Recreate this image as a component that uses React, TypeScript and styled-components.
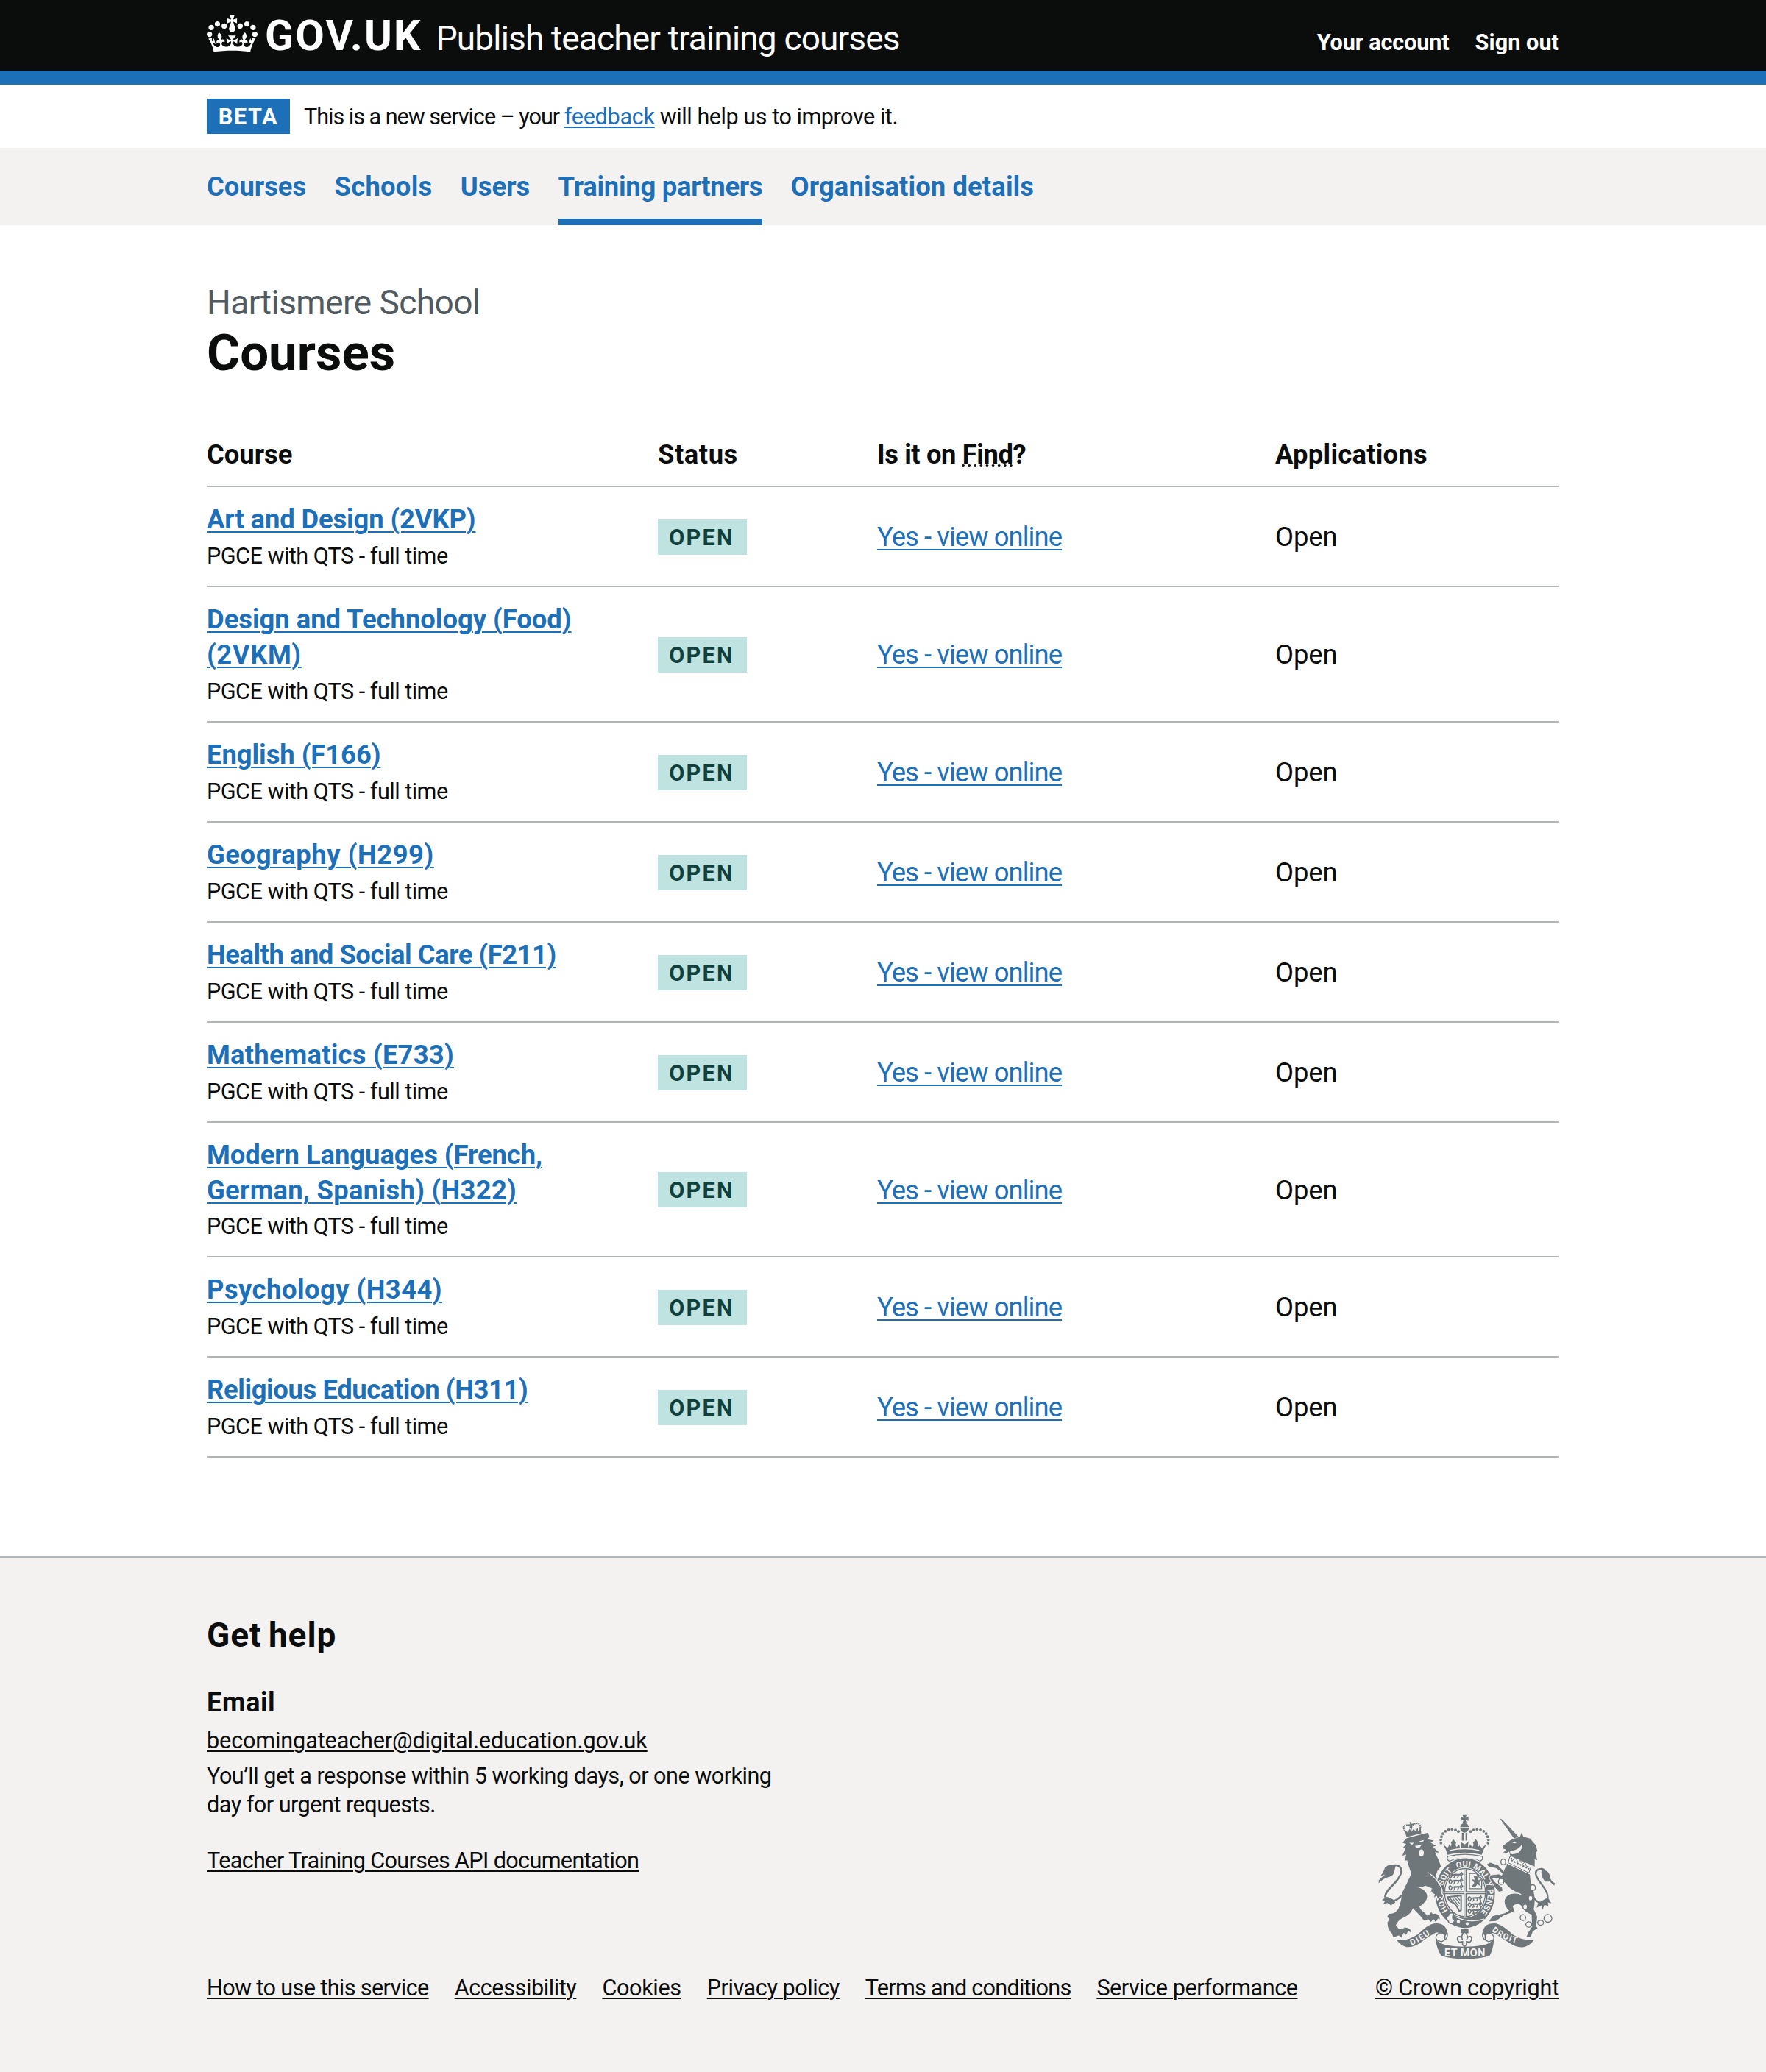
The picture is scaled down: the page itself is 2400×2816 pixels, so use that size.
import React from "react";
import styled, { createGlobalStyle, css } from "styled-components";

const color = {
  ink: "#0b0c0c",
  blue: "#1d70b8",
  grey: "#f3f2f1",
  border: "#b1b4b6",
  secondary: "#505a5f",
  tagBg: "#bfe3e0",
  tagInk: "#10403c",
  crest: "#6f777b",
};

const GlobalStyle = createGlobalStyle`
  *, *::before, *::after { box-sizing: border-box; }
  body {
    margin: 0;
    background: ${color.grey};
    color: ${color.ink};
    font-family: Roboto, "Liberation Sans", sans-serif;
    font-size: 36.4px;
    line-height: 47.87px;
  }
  h1, h2, h3, p, ul { margin: 0; padding: 0; }
  ul { list-style: none; }
`;

const small = css`
  font-size: 30.6px;
  line-height: 38.3px;
`;

type Tracked = { $track?: number };
const tracked = css<Tracked>`
  letter-spacing: ${(p) => p.$track ?? 0}px;
`;

const Container = styled.div`
  width: 1838px;
  margin: 0 auto;
`;

/* Header */

const Header = styled.header`
  height: 115px;
  background: ${color.ink};
  border-bottom: 19px solid ${color.blue};
  color: #fff;
`;

const HeaderRow = styled(Container)`
  display: flex;
  align-items: baseline;
  height: 96px;
`;

const Crown = styled.svg`
  align-self: flex-start;
  width: 69px;
  height: 51px;
  margin: 20px 10px 0 0;
  fill: currentColor;
`;

const Logotype = styled.span`
  font-size: 57.4px;
  font-weight: 700;
  line-height: 97px;
  letter-spacing: 2.2px;
`;

const ServiceName = styled.span`
  margin-left: 19px;
  font-size: 46px;
  line-height: 57px;
  letter-spacing: -0.83px;
`;

const AccountLinks = styled.nav`
  display: flex;
  gap: 35px;
  margin-left: auto;
  ${small}
  font-weight: 700;
`;

const AccountLink = styled.a<Tracked>`
  ${tracked}
`;

/* Phase banner */

const PhaseBar = styled.div`
  background: #fff;
`;

const Phase = styled(Container)`
  display: flex;
  align-items: center;
  gap: 19px;
  height: 86px;
  ${small}
`;

const PhaseText = styled.div`
  padding-top: 2px;
`;

const Tag = styled.strong<{ $kind: "phase" | "status" }>`
  display: flex;
  align-items: center;
  justify-content: center;
  height: 48px;
  padding-top: 2px;
  font-size: 30.6px;
  font-weight: 700;
  line-height: 46px;
  ${(p) =>
    p.$kind === "phase"
      ? css`
          width: 113px;
          background: ${color.blue};
          color: #fff;
          letter-spacing: 1.6px;
        `
      : css`
          width: 121px;
          padding-right: 2px;
          background: ${color.tagBg};
          color: ${color.tagInk};
          letter-spacing: 2.2px;
        `}
`;

const Run = styled.span<Tracked>`
  ${tracked}
`;

const Link = styled.a<Tracked & { $ink?: boolean; $bold?: boolean }>`
  ${tracked}
  color: ${(p) => (p.$ink ? color.ink : color.blue)};
  font-weight: ${(p) => (p.$bold ? 700 : 400)};
  text-decoration: underline;
  text-decoration-thickness: 2px;
  text-underline-offset: 0.11em;
`;

/* Primary navigation */

const NavBar = styled.nav`
  background: ${color.grey};
`;

const NavList = styled(Container).attrs({ as: "ul" })`
  display: flex;
  gap: 38.3px;
`;

const NavItem = styled.li<Tracked & { $active?: boolean }>`
  ${tracked}
  height: 105px;
  line-height: 106px;
  font-weight: 700;
  color: ${color.blue};
  box-shadow: ${(p) => (p.$active ? `inset 0 -9px ${color.blue}` : "none")};
`;

/* Main */

const Main = styled.main`
  padding: 76.5px 0 133.6px;
  background: #fff;
`;

const Caption = styled.div`
  font-size: 46px;
  line-height: 57.5px;
  letter-spacing: -0.53px;
  color: ${color.secondary};
`;

const Title = styled.h1`
  margin-bottom: 55.9px;
  padding-top: 1.5px;
  font-size: 69px;
  line-height: 76.6px;
  font-weight: 700;
`;

const Row = styled.div<{ $head?: boolean }>`
  display: grid;
  grid-template-columns: 613px 298px 541px 386px;
  align-items: center;
  padding: 20.1px 0 18.1px;
  border-bottom: 2px solid ${color.border};
  font-weight: ${(p) => (p.$head ? 700 : 400)};
`;

const Cell = styled.div<Tracked>`
  ${tracked}
  padding-right: 38px;
`;

const CourseLine = styled.div`
  white-space: nowrap;
`;

const Hint = styled.span`
  display: inline-block;
  vertical-align: baseline;
  font-size: 30.6px;
  line-height: 38.3px;
  letter-spacing: -0.52px;
`;

const Abbr = styled.abbr`
  text-decoration: underline dotted 4px;
  text-decoration-skip-ink: none;
  text-underline-offset: 1px;
`;

/* Footer */

const Footer = styled.footer`
  height: 700.5px;
  padding-top: 77px;
  border-top: 2px solid ${color.border};
  background: ${color.grey};
`;

const FooterRow = styled(Container)`
  display: flex;
  justify-content: space-between;
  align-items: flex-end;
`;

const FooterMain = styled.div`
  ${small}
`;

const HelpTitle = styled.h2`
  margin-bottom: 38.5px;
  font-size: 46px;
  line-height: 57.5px;
  letter-spacing: 0.93px;
  word-spacing: -3px;
`;

const HelpSubtitle = styled.h3`
  margin-bottom: 9.6px;
  font-size: 36.4px;
  line-height: 47.9px;
  letter-spacing: 0.5px;
`;

const HelpText = styled.p<Tracked>`
  ${tracked}
  width: 800px;
  margin: 9.6px 0 38.3px;
`;

const FooterLinks = styled.ul`
  display: flex;
  gap: 35px;
  margin-top: 134.5px;
`;

const Copyright = styled.div`
  display: flex;
  flex-direction: column;
  align-items: center;
  ${small}
`;

const Crest = styled.svg`
  width: 240px;
  height: 197px;
  margin: 0 2px 19.8px 0;
`;

const nav = [
  { label: "Courses", track: 0.02 },
  { label: "Schools", track: 0.26 },
  { label: "Users", track: 0.02 },
  { label: "Training partners", track: -0.25, active: true },
  { label: "Organisation details", track: 0.11 },
];

const courses = [
  { lines: ["Art and Design (2VKP)"], tracks: [-0.12] },
  { lines: ["Design and Technology (Food)", "(2VKM)"], tracks: [-0.02, 0.6] },
  { lines: ["English (F166)"], tracks: [-0.05] },
  { lines: ["Geography (H299)"], tracks: [0.55] },
  { lines: ["Health and Social Care (F211)"], tracks: [-0.47] },
  { lines: ["Mathematics (E733)"], tracks: [0.22] },
  { lines: ["Modern Languages (French,", "German, Spanish) (H322)"], tracks: [-0.05, 0.3] },
  { lines: ["Psychology (H344)"], tracks: [0.46] },
  { lines: ["Religious Education (H311)"], tracks: [-0.39] },
];

const footerLinks = [
  { label: "How to use this service", track: -0.62 },
  { label: "Accessibility", track: -0.42 },
  { label: "Cookies", track: -0.35 },
  { label: "Privacy policy", track: -0.45 },
  { label: "Terms and conditions", track: -0.75 },
  { label: "Service performance", track: -0.48 },
];

const CrownIcon = () => (
  <Crown viewBox="0 0 132 97" aria-hidden="true">
    <path
      fillRule="evenodd"
      d="M25 30.2c3.5 1.5 7.7-.2 9.1-3.7 1.5-3.6-.2-7.8-3.9-9.2-3.6-1.4-7.6.3-9.1 3.9-1.4 3.5.3 7.5 3.9 9zM9 39.5c3.6 1.5 7.8-.2 9.2-3.7 1.5-3.6-.2-7.8-3.9-9.1-3.6-1.5-7.6.2-9.1 3.8-1.4 3.5.3 7.5 3.8 9zM4.4 57.2c3.5 1.5 7.7-.2 9.1-3.8 1.5-3.6-.2-7.7-3.9-9.1-3.5-1.5-7.6.3-9.1 3.8-1.4 3.5.3 7.6 3.9 9.1zm38.3-21.4c3.5 1.5 7.7-.2 9.1-3.8 1.5-3.6-.2-7.7-3.9-9.1-3.6-1.5-7.6.3-9.1 3.8-1.3 3.6.4 7.7 3.9 9.1zm64.4-5.6c-3.6 1.5-7.8-.2-9.1-3.7-1.5-3.6.2-7.8 3.8-9.2 3.6-1.4 7.7.3 9.2 3.9 1.3 3.5-.4 7.5-3.9 9zm15.9 9.3c-3.6 1.5-7.7-.2-9.1-3.7-1.5-3.6.2-7.8 3.7-9.1 3.6-1.5 7.7.2 9.2 3.8 1.5 3.5-.3 7.5-3.8 9zm4.7 17.7c-3.6 1.5-7.8-.2-9.2-3.8-1.5-3.6.2-7.7 3.9-9.1 3.6-1.5 7.7.3 9.2 3.8 1.3 3.5-.4 7.6-3.9 9.1zM89.3 35.8c-3.6 1.5-7.8-.2-9.2-3.8-1.4-3.6.2-7.7 3.9-9.1 3.6-1.5 7.7.3 9.2 3.8 1.4 3.6-.3 7.7-3.9 9.1zM69.7 17.7l8.9 4.7V9.3l-8.9 2.8c-.2-.3-.5-.6-.9-.9L72.4 0H59.6l3.5 11.2c-.3.3-.6.5-.9.9l-8.8-2.8v13.1l8.8-4.7c.3.3.6.7.9.9l-5 15.4v.1c-.2.8-.4 1.6-.4 2.4 0 4.1 3.1 7.5 7 8.1h.2c.3 0 .7.1 1 .1.4 0 .7 0 1-.1h.2c4-.6 7.1-4.1 7.1-8.1 0-.8-.1-1.7-.4-2.4V34l-5.1-15.4c.4-.2.7-.6 1-.9zM66 92.8c16.9 0 32.8 1.1 47.1 3.2 4-16.9 8.9-26.7 14-33.5l-9.6-3.4c1 4.9 1.1 7.2 0 10.2-1.5-1.4-3-4.3-4.2-8.7L108.6 76c2.8-2 5-3.2 7.5-3.3-4.4 9.4-10 11.9-13.6 11.2-4.3-.8-6.3-4.6-5.6-7.9 1-4.7 5.7-5.9 8-.5 4.3-8.7-3-11.4-7.6-8.8 7.1-7.2 7.9-13.5 2.1-21.1-8 6.1-8.1 12.3-4.5 20.8-4.7-5.4-12.1-2.5-9.5 6.2 3.4-5.2 7.9-2 7.2 3.1-.6 4.3-6.4 7.8-13.5 7.2-10.3-.9-10.9-8-11.2-13.8 2.5-.5 7.1 1.8 11 7.3L80.2 60c-4.1 4.4-8 5.3-12.3 5.4 1.4-4.4 8-11.6 8-11.6H55.5s6.4 7.2 7.9 11.6c-4.2-.1-8-1-12.3-5.4l1.4 16.4c3.9-5.5 8.5-7.7 10.9-7.3-.3 5.8-.9 12.8-11.1 13.8-7.2.6-12.9-2.9-13.5-7.2-.7-5 3.8-8.3 7.1-3.1 2.7-8.7-4.6-11.6-9.4-6.2 3.7-8.5 3.6-14.7-4.6-20.8-5.8 7.6-5 13.9 2.2 21.1-4.7-2.6-11.9.1-7.7 8.8 2.3-5.5 7.1-4.2 8.1.5.7 3.3-1.3 7.1-5.7 7.9-3.5.7-9-1.8-13.5-11.2 2.5.1 4.7 1.3 7.5 3.3l-4.7-15.4c-1.2 4.4-2.7 7.2-4.3 8.7-1.1-3-.9-5.3 0-10.2l-9.5 3.4c5 6.9 9.9 16.7 14 33.5 14.8-2.1 30.8-3.2 47.7-3.2z"
    />
  </Crown>
);

/* Beads of the left arch of the crown; the right arch mirrors them about x = 422. */
const crownBeads = [
  [326, 166], [325, 153], [328, 140], [334, 128], [344, 118], [357, 112], [371, 110], [385, 113], [397, 119],
];

const mottoWords = [
  { word: "HO", at: "16.5%" },
  { word: "SOIT", at: "35.5%" },
  { word: "QUI", at: "49%" },
  { word: "MAL", at: "60.5%" },
  { word: "Y", at: "69.5%" },
  { word: "PENSE", at: "80.5%" },
];

/* Three walking lions, one under another. */
const Lions = ({ x, y }: { x: number; y: number }) => (
  <g transform={`translate(${x} ${y})`} fill="none" stroke={color.crest} strokeWidth="5" strokeLinecap="round">
    {[0, 25, 50].map((dy) => (
      <g key={dy} transform={`translate(0 ${dy})`}>
        <path d="M4 14Q0 4 8 1L16 8Q28 2 46 6L54 -2 58 4 52 9" />
        <path d="M16 8L10 18M24 8L26 17 20 19M42 8L38 18M50 9L54 17M30 7L44 5" />
      </g>
    ))}
  </g>
);

const RoyalArms = () => (
  <Crest viewBox="70 50 720 590" fill={color.crest} aria-hidden="true">
    <defs>
      <path id="garter" d="M424 478A92 108 0 0 1 332 370A92 108 0 0 1 424 262A92 108 0 0 1 516 370A92 108 0 0 1 424 478" />
      <path id="ribbon-left" d="M206 583Q254 564 304 522" />
      <path id="ribbon-right" d="M532 524Q580 564 650 578" />
    </defs>

    {/* Lion */}
    <path d="M165 380Q135 412 110 402Q82 386 122 345Q163 306 165 278Q160 248 122 260" fill="none" stroke={color.crest} strokeWidth="8" />
    <path d="M142 254Q112 250 97 266Q92 286 79 301L98 293L72 318V330Q88 312 108 306Q136 302 137 276ZM105 385L85 398L99 401L90 415L108 410L122 420L140 408L130 395Z" />
    <path d="M186 146L273 124L279 142L268 150L297 156L284 164L306 178L292 181L318 205L301 204L317 236L326 262L312 278L304 300L330 338L318 385L293 392L298 376L284 367L289 350L265 336Q252 350 220 344Q258 350 267 372Q278 400 238 425Q242 440 262 452L268 462L280 458L286 447L292 455L304 454Q322 460 321 478L314 474L304 488L296 476L284 488L274 476L256 482L243 464L212 432Q200 460 172 470Q148 482 142 502L154 516L168 518L178 510L190 512Q206 518 203 530L192 524L184 540L174 532L164 552L154 542L132 551L126 535Q106 515 108 488L116 480L107 466L114 454Q140 456 152 434Q166 400 166 372Q190 325 205 290L195 262L188 236L179 238L184 212L168 218L181 188L171 185L184 170L169 164Z" />
    <path d="M196 165L215 165L208 174ZM237 158L257 154L249 166ZM219 178L246 174L240 184L228 187Z" fill={color.grey} />
    <ellipse cx="246" cy="206" rx="10" ry="14" fill={color.grey} />
    <path d="M183 133L177 112L190 122L198 108L206 120L216 106L220 118L232 104L232 118L243 108L246 126L186 142Z" />
    <path d="M178 118Q166 92 188 93Q198 93 204 106Q206 90 224 86Q248 84 240 114" fill="none" stroke={color.crest} strokeWidth="6" strokeDasharray="5 3" />
    <path d="M201 80L206 104M192 94L214 89" stroke={color.crest} strokeWidth="6" fill="none" />

    {/* Unicorn */}
    <path d="M696 375Q722 425 754 402Q776 384 733 330Q698 285 722 274Q745 266 752 285" fill="none" stroke={color.crest} strokeWidth="7" />
    <path d="M736 277L757 280Q770 290 770 306Q776 322 790 330L788 340L768 322Q756 326 748 320Q732 300 736 277ZM762 388L776 412L762 408L764 424L748 418L740 438L736 420L716 430L722 410Z" />
    <path d="M566 66L575 70L642 140L624 148Z" />
    <path d="M610 154L648 140L655 123L662 140L690 148L698 158L712 174L719 198L712 206L718 236L708 232V262L694 256L608 218L604 200L594 206L580 204L592 193L578 188L580 176Z" />
    <path d="M614 162Q624 158 634 166Q622 170 614 162ZM608 198Q642 196 657 170Q662 188 640 206Q622 214 608 210Z" fill={color.grey} />
    <path d="M607 220L622 236L630 226L640 244L650 236L658 252L668 244L674 260L692 266L684 288L600 246Z" fill={color.grey} stroke={color.crest} strokeWidth="3" />
    <path d="M612 236L686 272" stroke={color.crest} strokeWidth="6" strokeDasharray="7 6" />
    <path d="M594 250L688 294Q692 340 704 366Q712 400 704 436L718 466L714 506L720 512L700 526L692 548L674 550L682 530L697 508L696 458Q664 448 650 418Q630 410 618 424L626 444L580 462L550 484L522 485L536 464L586 452L604 442Q576 414 590 388Q606 368 640 368Q604 354 590 330Z" />
    <path d="M604 372Q640 366 652 376" stroke={color.grey} strokeWidth="4" fill="none" />

    {/* Crown */}
    {crownBeads.map(([cx, cy]) => (
      <React.Fragment key={`${cx}-${cy}`}>
        <circle cx={cx} cy={cy} r="5.6" />
        <circle cx={844 - cx} cy={cy} r="5.6" />
      </React.Fragment>
    ))}
    <path d="M414 52H430L426 63L438 58V76L426 71L430 83H414L418 71L406 76V58L418 63ZM404 101Q406 88 422 84Q438 88 440 101ZM404 106H440Q438 120 422 124Q406 120 404 106ZM411 124H418V156H411ZM426 124H433V156H426Z" />
    <path d="M334 170L352 186Q360 178 358 170L364 180Q372 172 366 166L376 150L388 166Q382 174 390 182L400 172L404 188Q412 176 404 160L422 172L440 160Q432 176 440 188L444 172L454 182Q462 174 456 166L468 150L478 166Q472 172 480 180L486 170Q484 178 492 186L512 170Q498 192 492 214Q422 196 352 214Q348 192 334 170Z" />
    <path d="M362 196Q422 182 482 196" stroke={color.grey} strokeWidth="4" fill="none" />
    <path d="M354 220Q422 204 494 220Q500 232 486 240Q422 216 360 240Q346 232 354 220Z" fill={color.grey} stroke={color.crest} strokeWidth="4" />

    {/* Garter and shield */}
    <ellipse cx="424" cy="370" rx="126" ry="146" fill={color.grey} />
    <ellipse cx="424" cy="370" rx="122" ry="142" />
    <ellipse cx="424" cy="368" rx="88" ry="103" fill={color.grey} />
    <ellipse cx="424" cy="368" rx="83" ry="98" fill={color.grey} stroke={color.crest} strokeWidth="4" />
    <path d="M424 272V466M342 368H506" stroke={color.crest} strokeWidth="12" />
    <path d="M424 272V466M342 368H506" stroke={color.grey} strokeWidth="4" />
    <Lions x={356} y={289} />
    <Lions x={434} y={384} />
    <path d="M442 352V290H470L492 320V352Z" fill="none" stroke={color.crest} strokeWidth="4" />
    <path d="M450 346L462 328L450 314L464 316L458 298L474 302L480 318L488 314L482 328L490 344L474 334L466 346Z" />
    <path d="M352 386L408 380V440L400 444Q392 420 376 410Q358 404 352 386Z" fill="none" stroke={color.crest} strokeWidth="6" />
    <path d="M362 390L396 432M371 388L398 422M381 386L402 412M391 384L404 400" stroke={color.crest} strokeWidth="4" />
    <g fill={color.grey} fontFamily="Roboto, sans-serif" fontWeight="700" fontSize="33" textAnchor="middle">
      {mottoWords.map((m) => (
        <text key={m.word}>
          <textPath href="#garter" startOffset={m.at}>{m.word}</textPath>
        </text>
      ))}
    </g>

    {/* The lion's forepaw on the garter */}
    <path d="M276 288Q304 306 318 332Q334 352 330 372L336 380L331 396L322 386L312 398L308 384L294 392L299 376L284 367L289 350L266 340Z" stroke={color.grey} strokeWidth="4" />
    <path d="M264 286L282 292L296 344L284 368L289 350L262 340Z" />

    {/* The unicorn's forelegs on the garter */}
    <path
      d="M594 268L584 284L560 256L526 244L511 253L520 263L552 270L576 290L578 300L562 292L528 296Q518 304 528 318L546 348L562 366L578 362L576 346L548 326L536 310L560 312L592 332Z"
      stroke={color.grey}
      strokeWidth="3"
    />
    <path d="M590 262L608 262L612 344L592 334L572 304Z" />
    <g fill={color.grey} stroke={color.crest} strokeWidth="4">
      <ellipse cx="580" cy="243" rx="10" ry="12" />
      <ellipse cx="571" cy="323" rx="11" ry="12" />
      <ellipse cx="700" cy="348" rx="11" ry="12" />
      <ellipse cx="691" cy="391" rx="9" ry="11" />
      <ellipse cx="669" cy="426" rx="9" ry="11" />
      <ellipse cx="660" cy="470" rx="11" ry="12" />
      <ellipse cx="684" cy="498" rx="12" ry="11" />
      <ellipse cx="732" cy="491" rx="12" ry="10" />
      <circle cx="762" cy="473" r="16" />
    </g>

    {/* Buckle and strap */}
    <path d="M378 452Q360 446 356 462Q340 470 356 484Q356 498 376 492L384 480Q370 476 374 464Z" fill={color.grey} stroke={color.crest} strokeWidth="5" />
    <path d="M384 466Q440 494 502 476" fill="none" stroke={color.grey} strokeWidth="4" />
    <circle cx="397" cy="485" r="6.5" fill={color.grey} />
    <circle cx="433" cy="495" r="6.5" fill={color.grey} />

    {/* Ribbon */}
    <path d="M144 560Q190 568 232 538Q272 498 296 494Q344 488 352 530Q346 548 334 552Q328 530 306 530Q272 548 242 572Q214 592 186 590Q162 584 144 560Z" />
    <path d="M706 560Q660 566 620 540Q578 500 552 494Q502 488 496 530Q502 546 516 550Q520 530 544 534Q576 554 606 574Q634 594 664 590Q688 584 706 560Z" />
    <path d="M352 532Q356 558 328 568Q300 562 306 546Q314 528 334 534Q350 546 336 566M496 532Q490 558 520 568Q548 562 540 546Q532 528 514 536Q498 546 512 566" fill={color.grey} stroke={color.crest} strokeWidth="4" />
    <path d="M304 556Q316 574 346 582Q422 596 500 582Q530 574 542 556Q540 600 524 626Q422 652 328 626Q308 600 304 556Z" />
    <g fill={color.grey} fontFamily="Roboto, sans-serif" fontWeight="700">
      <text fontSize="34" letterSpacing="5">
        <textPath href="#ribbon-left">DIEU</textPath>
      </text>
      <text fontSize="34" letterSpacing="4">
        <textPath href="#ribbon-right">DROIT</textPath>
      </text>
      <text x="423" y="628" fontSize="43" textAnchor="middle" textLength="166">ET MON</text>
    </g>

    {/* Fleur-de-lis */}
    <path d="M406 516L438 516V534H406Z" />
    <path d="M422 526Q440 544 430 562Q434 544 448 548Q456 558 444 570L430 568V580L422 588L414 580V568L400 570Q388 558 396 548Q410 544 414 562Q404 544 422 526Z" fill={color.grey} stroke={color.crest} strokeWidth="5" />
  </Crest>
);

export default function App() {
  return (
    <>
      <GlobalStyle />
      <Header>
        <HeaderRow>
          <CrownIcon />
          <Logotype>GOV.UK</Logotype>
          <ServiceName>Publish teacher training courses</ServiceName>
          <AccountLinks>
            <AccountLink $track={-0.12}>Your account</AccountLink>
            <AccountLink $track={0.06}>Sign out</AccountLink>
          </AccountLinks>
        </HeaderRow>
      </Header>

      <PhaseBar>
        <Phase>
          <Tag $kind="phase">BETA</Tag>
          <PhaseText>
            <Run $track={-1.03}>This is a new service – your </Run>
            <Link $track={-0.29}>feedback</Link>
            <Run $track={-0.47}> will help us to improve it.</Run>
          </PhaseText>
        </Phase>
      </PhaseBar>

      <NavBar>
        <NavList>
          {nav.map((n) => (
            <NavItem key={n.label} $track={n.track} $active={n.active}>
              {n.label}
            </NavItem>
          ))}
        </NavList>
      </NavBar>

      <Main>
        <Container>
          <Caption>Hartismere School</Caption>
          <Title>Courses</Title>
          <Row $head>
            <Cell>Course</Cell>
            <Cell $track={0.54}>Status</Cell>
            <Cell $track={-0.41}>
              Is it on <Abbr>Find</Abbr>?
            </Cell>
            <Cell $track={0.24}>Applications</Cell>
          </Row>
          {courses.map((c) => (
            <Row key={c.lines[0]}>
              <Cell>
                {c.lines.map((line, i) => (
                  <CourseLine key={line}>
                    <Link $bold $track={c.tracks[i]}>
                      {line}
                    </Link>
                  </CourseLine>
                ))}
                <Hint>PGCE with QTS - full time</Hint>
              </Cell>
              <Cell>
                <Tag $kind="status">OPEN</Tag>
              </Cell>
              <Cell>
                <Link $track={-0.94}>Yes - view online</Link>
              </Cell>
              <Cell $track={-0.09}>Open</Cell>
            </Row>
          ))}
        </Container>
      </Main>

      <Footer>
        <FooterRow>
          <FooterMain>
            <HelpTitle>Get help</HelpTitle>
            <HelpSubtitle>Email</HelpSubtitle>
            <Link $ink $track={-0.13}>
              becomingateacher@digital.education.gov.uk
            </Link>
            <HelpText $track={-0.51}>
              You’ll get a response within 5 working days, or one working day for urgent requests.
            </HelpText>
            <Link $ink $track={-0.64}>
              Teacher Training Courses API documentation
            </Link>
            <FooterLinks>
              {footerLinks.map((l) => (
                <li key={l.label}>
                  <Link $ink $track={l.track}>
                    {l.label}
                  </Link>
                </li>
              ))}
            </FooterLinks>
          </FooterMain>
          <Copyright>
            <RoyalArms />
            <Link $ink $track={-0.2}>
              © Crown copyright
            </Link>
          </Copyright>
        </FooterRow>
      </Footer>
    </>
  );
}
